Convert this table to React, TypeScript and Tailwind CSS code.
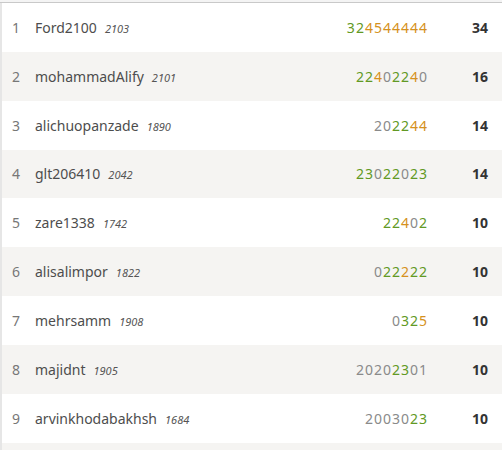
const players = [
  { rank: 1, name: "Ford2100", rating: 2103, sheet: "324544444", colors: "ggooooooo", total: 34 },
  { rank: 2, name: "mohammadAlify", rating: 2101, sheet: "22402240", colors: "ggonggon", total: 16 },
  { rank: 3, name: "alichuopanzade", rating: 1890, sheet: "202244", colors: "nnggoo", total: 14 },
  { rank: 4, name: "glt206410", rating: 2042, sheet: "23022023", colors: "ggnggngg", total: 14 },
  { rank: 5, name: "zare1338", rating: 1742, sheet: "22402", colors: "ggong", total: 10 },
  { rank: 6, name: "alisalimpor", rating: 1822, sheet: "022222", colors: "nggogg", total: 10 },
  { rank: 7, name: "mehrsamm", rating: 1908, sheet: "0325", colors: "nggo", total: 10 },
  { rank: 8, name: "majidnt", rating: 1905, sheet: "20202301", colors: "nnnnggnn", total: 10 },
  { rank: 9, name: "arvinkhodabakhsh", rating: 1684, sheet: "2003023", colors: "nnnnngg", total: 10 },
];

const digitClass: Record<string, string> = {
  g: "text-[#629924]",
  o: "text-[#d59120]",
  n: "text-[#8a8a8a]",
};

function Sheet({ sheet, colors }: { sheet: string; colors: string }) {
  return (
    <div className="flex-1 text-right tracking-[1px] text-[14px]">
      {sheet.split("").map((d, i) => (
        <span key={i} className={digitClass[colors[i]]}>
          {d}
        </span>
      ))}
    </div>
  );
}

export default function App() {
  return (
    <div
      className="w-[502px] h-[450px] overflow-hidden bg-white"
      style={{ fontFamily: '"Noto Sans", "Open Sans", sans-serif' }}
    >
      <div className="h-[2px] bg-[#f4f4f4]" />
      <div className="h-px bg-[#c9c9c9]" />
      <div className="border-l-2 border-[#e6e6e6]">
        {[...players, null].map((p, i) => (
          <div
            key={i}
            className={`flex items-center h-[48.85px] ${i % 2 === 1 ? "bg-[#f5f4f2]" : "bg-white"}`}
          >
            {p && (
              <>
                <div className="w-[33px] pl-[10px] text-[14px] text-[#777]">{p.rank}</div>
                <div className="flex items-baseline text-[#4d4d4d] text-[14px]">
                  {p.name}
                  <span className="ml-[8px] text-[11px] italic text-[#555]">{p.rating}</span>
                </div>
                <Sheet sheet={p.sheet} colors={p.colors} />
                <div className="w-[74px] pr-[14px] text-right text-[14px] font-bold text-[#333]">
                  {p.total}
                </div>
              </>
            )}
          </div>
        ))}
      </div>
    </div>
  );
}
